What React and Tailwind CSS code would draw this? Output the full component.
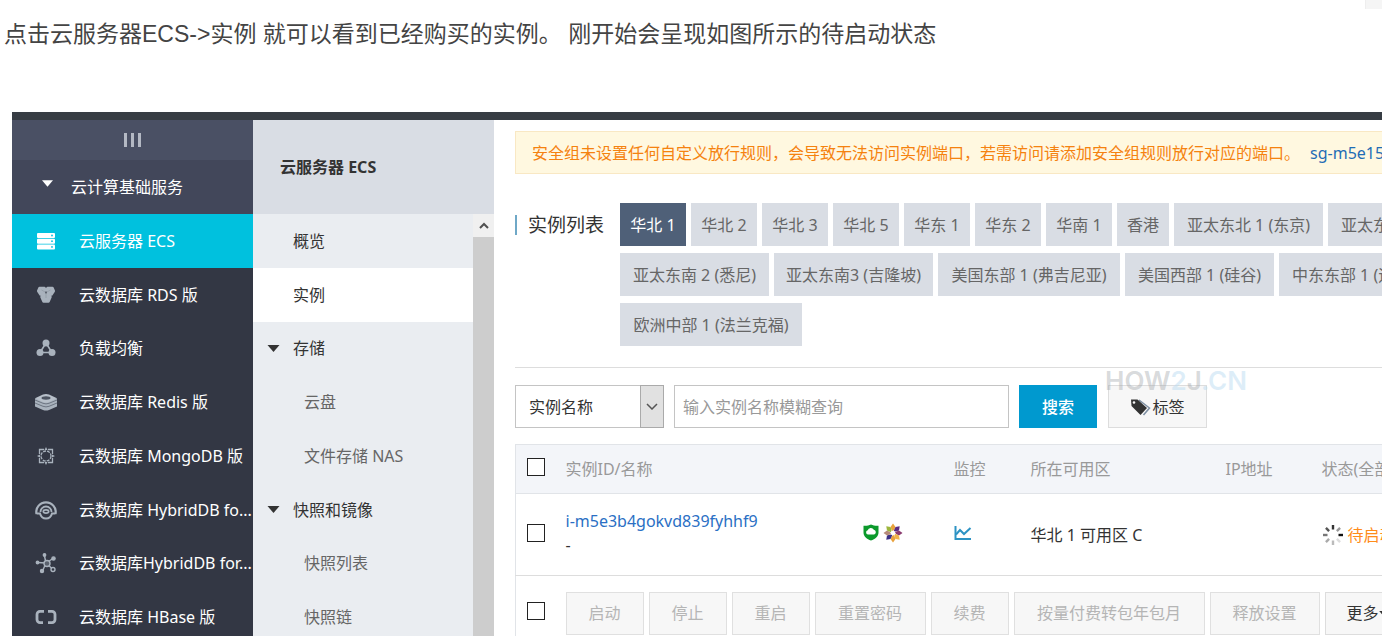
import React from 'react';

const regionRows = [
  [
    { name: '华北 1', width: 'w-[66px]', active: true },
    { name: '华北 2', width: 'w-[66px]' },
    { name: '华北 3', width: 'w-[66px]' },
    { name: '华北 5', width: 'w-[66px]' },
    { name: '华东 1', width: 'w-[66px]' },
    { name: '华东 2', width: 'w-[66px]' },
    { name: '华南 1', width: 'w-[66px]' },
    { name: '香港', width: 'w-[52px]' },
    { name: '亚太东北 1 (东京)', width: 'w-[149px]' },
    { name: '亚太东南 1 (新加坡)', width: 'w-[165px]' },
  ],
  [
    { name: '亚太东南 2 (悉尼)', width: 'w-[149px]' },
    { name: '亚太东南3 (吉隆坡)', width: 'w-[159px]' },
    { name: '美国东部 1 (弗吉尼亚)', width: 'w-[182px]' },
    { name: '美国西部 1 (硅谷)', width: 'w-[149px]' },
    { name: '中东东部 1 (迪拜)', width: 'w-[149px]' },
  ],
  [{ name: '欧洲中部 1 (法兰克福)', width: 'w-[182px]' }],
];

const actions = [
  { label: '启动', width: 'w-[78px]' },
  { label: '停止', width: 'w-[78px]' },
  { label: '重启', width: 'w-[78px]' },
  { label: '重置密码', width: 'w-[111px]' },
  { label: '续费', width: 'w-[78px]' },
  { label: '按量付费转包年包月', width: 'w-[191px]' },
  { label: '释放设置', width: 'w-[110px]' },
];

const subMenu = [
  { label: '概览', type: 'item' },
  { label: '实例', type: 'item', active: true },
  { label: '存储', type: 'group' },
  { label: '云盘', type: 'child' },
  { label: '文件存储 NAS', type: 'child' },
  { label: '快照和镜像', type: 'group' },
  { label: '快照列表', type: 'child' },
  { label: '快照链', type: 'child' },
];

function EcsIcon() {
  return (
    <svg viewBox="0 0 22 22" className="size-[22px]">
      <g fill="#fff">
        <rect x="2" y="3" width="18" height="5" rx="1" />
        <rect x="2" y="8.700" width="18" height="5" rx="1" />
        <rect x="2" y="14.400" width="18" height="5" rx="1" />
      </g>
      <g fill="#00c1de">
        <circle cx="17" cy="5.500" r="0.9" />
        <circle cx="17" cy="11.200" r="0.9" />
        <circle cx="17" cy="16.900" r="0.9" />
      </g>
    </svg>
  );
}

function RdsIcon() {
  return (
    <svg viewBox="0 0 22 22" className="size-[22px]">
      <g fill="#a9b2bd" stroke="#a9b2bd" strokeWidth="2.500" strokeLinejoin="round">
        <path d="M4.500 4h5l1.800 3.300L9.500 10.500h-4L3.200 7z" />
        <path d="M12.500 4h5L18.800 7l-2.300 3.500h-4L10.700 7.300z" />
        <path d="M8.700 9.500h4.600l2.200 3.500-2 4.500h-5L6.500 13z" />
      </g>
      <circle cx="11" cy="8.500" r="1" fill="#333744" />
      <path d="M11 8.500L6.500 6M11 8.500L15.500 6M11 9v5" stroke="#8b939f" strokeWidth="0.6" />
    </svg>
  );
}

function SlbIcon() {
  return (
    <svg viewBox="0 0 22 22" className="size-[22px]">
      <path d="M11 6L5 15.500h12z" fill="none" stroke="#a9b2bd" strokeWidth="1.600" />
      <g fill="#a9b2bd">
        <circle cx="11" cy="6" r="3.500" />
        <circle cx="5" cy="15.500" r="3.500" />
        <circle cx="17" cy="15.500" r="3.500" />
      </g>
    </svg>
  );
}

function RedisIcon() {
  return (
    <svg viewBox="0 0 24 22" className="h-[22px] w-[24px]">
      <path d="M1 7.500v8l8 3.500q3 1.200 6 0l8-3.500v-8z" fill="#a9b2bd" />
      <path d="M9 3.500q3-1.200 6 0l8 3.700-8 3.700q-3 1.200-6 0L1 7.200z" fill="#b8c0ca" />
      <path d="M1 9l8 3.300q3 1.200 6 0L23 9M1 12l8 3.300q3 1.200 6 0l8-3.300" fill="none" stroke="#5d6572" strokeWidth="0.8" />
      <ellipse cx="12" cy="7" rx="4.500" ry="1.700" fill="#4d5461" />
    </svg>
  );
}

function MongoIcon() {
  return (
    <svg viewBox="0 0 22 22" className="size-[22px]">
      <g fill="none" stroke="#a9b2bd" strokeWidth="1.300">
        <path d="M4.500 9V4.500H9M13 4.500h4.500V9M17.500 13v4.500H13M9 17.500H4.500V13" />
        <circle cx="11" cy="11" r="5" strokeDasharray="3 1" />
      </g>
      <g fill="#a9b2bd">
        <path d="M11 2l1.500 3h-3zM11 20l1.500-3h-3zM2 11l3-1.500v3zM20 11l-3-1.500v3z" />
      </g>
    </svg>
  );
}

function HybridIcon() {
  return (
    <svg viewBox="0 0 24 22" className="h-[22px] w-[24px]" fill="none" stroke="#a9b2bd">
      <path d="M2.500 15a9.700 9.700 0 1 1 19 0" strokeWidth="2.200" />
      <path d="M2.500 14.500h3.500c.800 3 3 5 6 5s5.200-2 6-5h3.500" strokeWidth="2" />
      <path d="M6.500 13a5.500 5.500 0 1 1 11 0" strokeWidth="1.800" />
      <ellipse cx="12" cy="12.500" rx="2.700" ry="1.600" strokeWidth="1.700" />
    </svg>
  );
}

function HybridNodesIcon() {
  return (
    <svg viewBox="0 0 22 22" className="size-[22px]" stroke="#a9b2bd" strokeWidth="1.400">
      <path d="M11 11L9.500 4M11 11L2.500 10.500M11 11l7-4.500M11 11l6.500 6M11 11l-3.500 8" />
      <g fill="#a9b2bd">
        <circle cx="9.500" cy="3" r="1.200" />
        <circle cx="2.500" cy="10.500" r="1.200" />
        <circle cx="18.500" cy="6.500" r="1.600" />
        <circle cx="7" cy="19" r="1.500" />
      </g>
      <circle cx="18" cy="17.500" r="2" fill="#333744" />
      <circle cx="12" cy="11.500" r="3" fill="#5a616d" />
    </svg>
  );
}

function HBaseIcon() {
  return (
    <svg viewBox="0 0 22 22" className="size-[22px]" fill="none" stroke="#a9b2bd" strokeWidth="2.800">
      <path d="M9 5.400H5a3 3 0 0 0-3 3v5.200a3 3 0 0 0 3 3h3M13 5.400h4a3 3 0 0 1 3 3v5.200a3 3 0 0 1-3 3h-4" />
    </svg>
  );
}

const products = [
  { label: '云服务器 ECS', icon: EcsIcon, active: true },
  { label: '云数据库 RDS 版', icon: RdsIcon },
  { label: '负载均衡', icon: SlbIcon },
  { label: '云数据库 Redis 版', icon: RedisIcon },
  { label: '云数据库 MongoDB 版', icon: MongoIcon },
  { label: '云数据库 HybridDB fo...', icon: HybridIcon },
  { label: '云数据库HybridDB for...', icon: HybridNodesIcon },
  { label: '云数据库 HBase 版', icon: HBaseIcon },
];

function ShieldIcon() {
  return (
    <svg viewBox="0 0 16 17" className="h-[17px] w-[16px]">
      <path d="M8 0.500c2.300 1.200 4.800 1.500 7.500 1.300v6.700c0 4-3.500 6.800-7.500 8-4-1.200-7.500-4-7.500-8V1.800C3.200 2 5.700 1.700 8 .500z" fill="#0c9a2c" />
      <path d="M5 10.500a2.200 2.200 0 0 1-.300-4.300 3.300 3.300 0 0 1 6.100-.500 2.500 2.500 0 0 1 .400 4.800z" fill="#fff" />
    </svg>
  );
}

function PinwheelIcon() {
  const colors = ['#e8a33d', '#5b2d82', '#8a3a6f', '#f0b44a', '#e9a23b', '#3b2f86', '#b58a7a', '#9db63c'];
  return (
    <svg viewBox="-10 -10 20 20" className="size-[20px]">
      {colors.map((color, i) => (
        <path key={i} d="M-1 -2L-2.500 -6L0 -9.500L2.500 -6L1 -3z" fill={color} transform={`rotate(${i * 45})`} />
      ))}
    </svg>
  );
}

function ChartIcon() {
  return (
    <svg viewBox="0 0 18 16" className="h-[16px] w-[18px]" fill="none" stroke="#2d93c4" strokeWidth="2">
      <path d="M1.500 1v13H17" />
      <path d="M2 9.500l4-4.500 4 4 6.500-6" />
    </svg>
  );
}

function SpinnerIcon() {
  const shades = ['#333', '#999', '#111', '#ddd', '#bbb', '#aaa', '#777', '#555'];
  return (
    <svg viewBox="-11 -11 22 22" className="size-[22px] shrink-0">
      {shades.map((shade, i) => (
        <path key={i} d="M0 -10V-5.500" stroke={shade} strokeWidth="2.400" transform={`rotate(${i * 45})`} />
      ))}
    </svg>
  );
}

function TagsIcon() {
  return (
    <svg viewBox="0 0 22 18" className="h-[18px] w-[22px]">
      <path d="M9 2l10.500 8-6 7" fill="none" stroke="#7d8fa3" strokeWidth="1.500" />
      <path d="M1 1.500L7.500 1.500L17 10L10.500 17L1.500 8z" fill="#333" />
      <circle cx="4" cy="4.500" r="1.300" fill="#f7f7f7" />
    </svg>
  );
}

function Caret({ className }) {
  return (
    <svg viewBox="0 0 12 7" className={className}>
      <path d="M0 0h12L6 7z" fill="currentColor" />
    </svg>
  );
}

function Checkbox({ label }) {
  return (
    <input
      type="checkbox"
      aria-label={label}
      className="block size-[18px] appearance-none border border-[#222] bg-white"
    />
  );
}

function ProductSidebar() {
  return (
    <nav className="w-[241px] shrink-0 bg-[#333744] text-white">
      <button type="button" aria-label="收起" className="flex h-10 w-full items-center justify-center gap-1 bg-[#4a5064]">
        <span className="h-[14px] w-[3px] bg-[#b4b9c4]" />
        <span className="h-[14px] w-[3px] bg-[#b4b9c4]" />
        <span className="h-[14px] w-[3px] bg-[#b4b9c4]" />
      </button>
      <button type="button" className="flex h-[54px] w-full items-center gap-[18px] bg-[#42475a] pl-[30px]">
        <Caret className="mb-2 h-[7px] w-[11px]" />
        云计算基础服务
      </button>
      <ul className="grid h-[430px] auto-rows-fr">
        {products.map(({ label, icon: Icon, active }) => (
          <li key={label}>
            <a
              href="#"
              className={`flex h-full items-center overflow-hidden whitespace-nowrap ${active ? 'bg-[#00c1de]' : ''}`}
            >
              <span className="flex w-[67px] shrink-0 justify-center">
                <Icon />
              </span>
              {label}
            </a>
          </li>
        ))}
      </ul>
    </nav>
  );
}

function EcsMenu() {
  return (
    <div className="w-[241px] shrink-0 bg-[#eaedf1]">
      <h2 className="flex h-[94px] items-center bg-[#d9dde4] pl-[27px] font-bold text-[#333]">云服务器 ECS</h2>
      <div className="flex">
        <ul className="grid h-[430px] flex-1 auto-rows-fr">
          {subMenu.map((item) => (
            <li key={item.label}>
              <a
                href="#"
                className={`flex h-full items-center ${item.active ? 'bg-white' : ''} ${
                  item.type === 'child' ? 'pl-[51px] text-[#666]' : 'text-[#333]'
                } ${item.type === 'item' ? 'pl-10' : ''} ${item.type === 'group' ? 'gap-[13px] pl-[14px]' : ''}`}
              >
                {item.type === 'group' && <Caret className="h-[7px] w-[13px]" />}
                {item.label}
              </a>
            </li>
          ))}
        </ul>
        {/* Scrollbar */}
        <div className="w-[21px] bg-[#cdcdcd]">
          <div className="flex h-[23px] items-center justify-center bg-[#f0f0f0]">
            <svg viewBox="0 0 10 7" className="h-[7px] w-[10px]" fill="none" stroke="#505050" strokeWidth="2">
              <path d="M1 6l4-4 4 4" />
            </svg>
          </div>
        </div>
      </div>
    </div>
  );
}

function RegionPicker() {
  return (
    <div className="mt-[29px] flex border-b border-[#ddd] pb-[21px]">
      <div className="flex h-[43px] w-[105px] shrink-0 items-center gap-[11px]">
        <span className="h-5 w-[2px] bg-[#6fa8c7]" />
        <h1 className="text-[19px] text-[#333]">实例列表</h1>
      </div>
      <div className="flex flex-col gap-[7px]">
        {regionRows.map((row, i) => (
          <div key={i} className="flex gap-[5px]">
            {row.map((region) => (
              <button
                key={region.name}
                type="button"
                className={`h-[43px] shrink-0 ${region.width} ${
                  region.active ? 'bg-[#4f6078] text-white' : 'bg-[#d9dde4] text-[#666]'
                }`}
              >
                {region.name}
              </button>
            ))}
          </div>
        ))}
      </div>
    </div>
  );
}

function SearchBar() {
  return (
    <form className="mt-[17px] flex" onSubmit={(e) => e.preventDefault()}>
      <div className="relative w-[149px]">
        <select
          aria-label="查询条件"
          className="h-[43px] w-full appearance-none border border-[#c4c4c4] bg-white pl-[13px] text-[#333]"
        >
          <option>实例名称</option>
        </select>
        <span className="pointer-events-none absolute inset-y-0 right-0 flex w-6 items-center justify-center border border-[#aaa] bg-[#e1e1e1]">
          <svg viewBox="0 0 12 7" className="h-[7px] w-[12px]" fill="none" stroke="#555" strokeWidth="1.500">
            <path d="M1 1l5 5 5-5" />
          </svg>
        </span>
      </div>
      <input
        type="text"
        aria-label="实例名称"
        placeholder="输入实例名称模糊查询"
        className="ml-[10px] h-[43px] w-[335px] border border-[#c4c4c4] pl-2 placeholder:text-[#999]"
      />
      <button type="submit" className="ml-[10px] w-[78px] bg-[#0099cf] font-medium text-white">
        搜索
      </button>
      <button type="button" className="ml-[11px] flex w-[99px] items-center justify-center border border-[#ddd] bg-[#f7f7f7] text-[#333]">
        <TagsIcon />
        标签
      </button>
    </form>
  );
}

function InstanceTable() {
  return (
    <table className="mt-4 w-[1016px] table-fixed border border-[#e1e4e8] text-left text-[#333]">
      <colgroup>
        <col className="w-[50px]" />
        <col className="w-[297px]" />
        <col className="w-[91px]" />
        <col className="w-[77px]" />
        <col className="w-[195px]" />
        <col className="w-[96px]" />
        <col className="w-[210px]" />
      </colgroup>
      <thead>
        <tr className="h-[49px] border-b border-[#e1e4e8] bg-[#f3f5f9] text-[#999]">
          <th className="pb-1 pl-[11px]"><Checkbox label="全选" /></th>
          <th className="font-normal" colSpan={2}>实例ID/名称</th>
          <th className="font-normal">监控</th>
          <th className="font-normal">所在可用区</th>
          <th className="font-normal">IP地址</th>
          <th className="font-normal">状态(全部)</th>
        </tr>
      </thead>
      <tbody>
        <tr className="h-[82px] border-b border-[#ddd]">
          <td className="pb-1 pl-[11px]"><Checkbox label="选择实例" /></td>
          <td className="pb-1 leading-6">
            <a href="#" className="block text-[#2a6fc4]">i-m5e3b4gokvd839fyhhf9</a>
            -
          </td>
          <td className="pb-1">
            <div className="flex items-center gap-1">
              <ShieldIcon />
              <PinwheelIcon />
            </div>
          </td>
          <td className="pb-1">
            <a href="#" aria-label="监控" className="block"><ChartIcon /></a>
          </td>
          <td>华北 1 可用区 C</td>
          <td />
          <td>
            <span className="flex items-center gap-1 text-[#ff8c1a]">
              <SpinnerIcon />
              待启动
            </span>
          </td>
        </tr>
      </tbody>
      <tfoot>
        <tr className="h-[75px]">
          <td className="pb-1 pl-[11px]"><Checkbox label="全选实例" /></td>
          <td colSpan={6}>
            <div className="flex gap-[5px]">
              {actions.map((action) => (
                <button
                  key={action.label}
                  type="button"
                  disabled
                  className={`h-[43px] shrink-0 border border-[#e0e0e0] bg-[#f7f7f7] text-[#b5b5b5] ${action.width}`}
                >
                  {action.label}
                </button>
              ))}
              <button type="button" className="flex h-[43px] w-[100px] shrink-0 items-center border border-[#ddd] bg-[#f7f7f7] pl-[21px] text-[#333]">
                更多
                <Caret className="h-[5px] w-[9px]" />
              </button>
            </div>
          </td>
        </tr>
      </tfoot>
    </table>
  );
}

export default function App() {
  return (
    <div className="relative h-screen overflow-hidden bg-white font-['Noto_Sans','Noto_Sans_CJK_SC',sans-serif] text-[16px] leading-6">
      <div className="absolute top-0 right-0 h-[9px] w-[17px] border-l border-[#eee] bg-[#f5f5f5]" />
      <p className="h-[112px] pt-[17px] pl-1 font-['Liberation_Sans','Noto_Sans_CJK_SC',sans-serif] text-[23px] leading-[34px] whitespace-nowrap text-[#444]">
        点击云服务器ECS-&gt;实例 就可以看到已经购买的实例。 刚开始会呈现如图所示的待启动状态
      </p>

      <div className="ml-3">
        <div className="h-2 bg-[#373d44]" />
        <div className="flex">
          <ProductSidebar />
          <EcsMenu />
          <main className="min-w-0 flex-1 overflow-hidden pt-[11px] pl-[21px] whitespace-nowrap">
            <div className="flex h-[43px] items-center gap-[10px] border border-r-0 border-[#f9e8c4] bg-[#fff8e0] pl-4 text-[#f5820f]">
              安全组未设置任何自定义放行规则，会导致无法访问实例端口，若需访问请添加安全组规则放行对应的端口。
              <a href="#" className="text-[#1f6db5]">sg-m5e15</a>
            </div>
            <RegionPicker />
            <div className="relative">
              <SearchBar />
              {/* Watermark */}
              <div className="pointer-events-none absolute -top-[17px] left-[590px] font-['Inter',sans-serif] text-[26px] leading-[26px] font-semibold text-[#9aa0a6]/40">
                HOW<span className="text-[#bcdcf2]/50">2</span>J<span className="text-[#bcdcf2]/50">.CN</span>
              </div>
            </div>
            <InstanceTable />
          </main>
        </div>
      </div>
    </div>
  );
}
